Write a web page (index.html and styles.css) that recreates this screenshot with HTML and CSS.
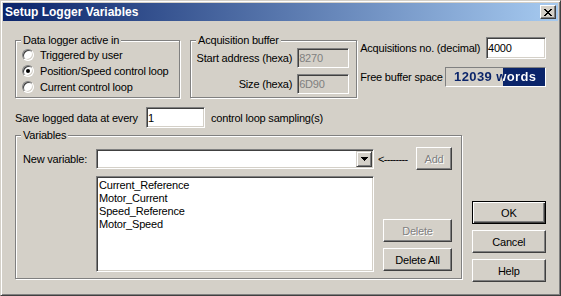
FILE: index.html
```html
<!DOCTYPE html>
<html lang="en">
<head>
    <meta charset="UTF-8">
    <title>Setup Logger Variables</title>
    <link rel="stylesheet" href="styles.css">
</head>
<body>
    <div class="window">
        <div class="titlebar">
            <span class="title">Setup Logger Variables</span>
            <button class="close-btn" type="button">
                <svg width="8" height="7" viewBox="0 0 8 7" shape-rendering="crispEdges">
                    <path d="M0 0h2v1h-2zM6 0h2v1h-2zM1 1h2v1h-2zM5 1h2v1h-2zM2 2h4v1h-4zM3 3h2v1h-2zM2 4h4v1h-4zM1 5h2v1h-2zM5 5h2v1h-2zM0 6h2v1h-2zM6 6h2v1h-2z" fill="#000"/>
                </svg>
            </button>
        </div>

        <div class="content">
            <div class="top-row">
                <fieldset class="group group-mode">
                    <legend>Data logger active in</legend>
                    <label class="radio-row"><span class="radio"></span>Triggered by user</label>
                    <label class="radio-row"><span class="radio checked"></span>Position/Speed control loop</label>
                    <label class="radio-row"><span class="radio"></span>Current control loop</label>
                </fieldset>

                <fieldset class="group group-buffer">
                    <legend>Acquisition buffer</legend>
                    <div class="buffer-body">
                        <div class="field-row">
                            <span>Start address (hexa)</span>
                            <input class="field hexa" type="text" value="8270" disabled>
                        </div>
                        <div class="field-row">
                            <span>Size (hexa)</span>
                            <input class="field hexa" type="text" value="6D90" disabled>
                        </div>
                    </div>
                </fieldset>

                <div class="acq">
                    <div class="acq-row">
                        <span>Acquisitions no. (decimal)</span>
                        <input class="field acq-count" type="text" value="4000">
                    </div>
                    <div class="acq-row free-row">
                        <span>Free buffer space</span>
                        <div class="gauge" style="--free: 42%">
                            <span class="gauge-text">12039 words</span>
                        </div>
                    </div>
                </div>
            </div>

            <div class="save-row">
                <span class="save-label">Save logged data at every</span>
                <input class="field save-every" type="text" value="1">
                <span class="save-unit">control loop sampling(s)</span>
            </div>

            <div class="bottom-row">
                <fieldset class="group group-vars">
                    <legend>Variables</legend>
                    <div class="vars-grid">
                        <span class="new-label">New variable:</span>
                        <div class="field combo">
                            <span class="combo-btn">
                                <svg width="7" height="4" viewBox="0 0 7 4" shape-rendering="crispEdges">
                                    <path d="M0 0h7v1h-7zM1 1h5v1h-5zM2 2h3v1h-3zM3 3h1v1h-1z" fill="#000"/>
                                </svg>
                            </span>
                        </div>
                        <div class="add-cell">
                            <span class="arrow">&lt;--------</span>
                            <button class="btn add-btn" type="button" disabled>Add</button>
                        </div>

                        <span></span>
                        <div class="field listbox">
                            <div>Current_Reference</div>
                            <div>Motor_Current</div>
                            <div>Speed_Reference</div>
                            <div>Motor_Speed</div>
                        </div>
                        <div class="list-btns">
                            <button class="btn list-btn" type="button" disabled>Delete</button>
                            <button class="btn list-btn" type="button">Delete All</button>
                        </div>
                    </div>
                </fieldset>

                <div class="dialog-btns">
                    <button class="btn default" type="button">OK</button>
                    <button class="btn" type="button">Cancel</button>
                    <button class="btn" type="button">Help</button>
                </div>
            </div>
        </div>
    </div>
</body>
</html>
```

FILE: styles.css
```css
body {
    margin: 0;
    font-family: "Liberation Sans", Arial, sans-serif;
    font-size: 11px;
    letter-spacing: -0.2px;
    white-space: nowrap;
    color: #000;
    background-color: #d4d0c8;
}
.window {
    width: 561px;
    height: 296px;
    box-sizing: border-box;
    overflow: hidden;
    padding: 2px;
    border: 1px solid;
    border-color: #d4d0c8 #404040 #404040 #d4d0c8;
    box-shadow: inset 1px 1px #fff, inset -1px -1px #808080;
    background-color: #d4d0c8;
}
.titlebar {
    height: 18px;
    display: flex;
    align-items: center;
    justify-content: space-between;
    padding: 0 2px 0 2px;
    background: linear-gradient(to right, #0a246a, #a6caf0);
}
.title {
    color: white;
    font-weight: bold;
    font-size: 12px;
    letter-spacing: 0;
}
.close-btn {
    width: 16px;
    height: 14px;
    padding: 0;
    display: flex;
    align-items: center;
    justify-content: center;
    background-color: #d4d0c8;
    border: 1px solid;
    border-color: #fff #404040 #404040 #fff;
    box-shadow: inset -1px -1px #808080;
}
.content {
    padding: 13px 12px 0 12px;
}

/* group boxes */
.group {
    margin: 0;
    padding: 0;
    min-width: 0;
    border: 1px solid #808080;
    box-shadow: inset 1px 1px #fff, 1px 1px #fff;
}
.group legend {
    margin-left: 5px;
    padding: 0 2px;
    line-height: 13px;
    background-color: #d4d0c8;
}
.top-row {
    display: flex;
    align-items: flex-start;
}
.group-mode {
    width: 165px;
    padding-bottom: 2px;
}
.radio-row {
    height: 16px;
    display: flex;
    align-items: center;
    gap: 6px;
    padding-left: 6px;
}
.radio {
    flex: none;
    width: 12px;
    height: 12px;
    box-sizing: border-box;
    border-radius: 50%;
    border: 1px solid;
    border-color: #808080 #fff #fff #808080;
    box-shadow: inset 1px 1px #404040, inset -1px -1px #d4d0c8;
    background-color: #fff;
    display: flex;
    align-items: center;
    justify-content: center;
}
.radio.checked::after {
    content: "";
    width: 4px;
    height: 4px;
    border-radius: 50%;
    background-color: #000;
}
.group-buffer {
    width: 167px;
    margin-left: 10px;
}
.buffer-body {
    display: flex;
    flex-direction: column;
    gap: 6px;
    padding: 1px 7px 3px 0;
}
.field-row {
    height: 20px;
    display: flex;
    align-items: center;
    justify-content: flex-end;
    gap: 5px;
}

/* sunken edit fields */
.field {
    box-sizing: border-box;
    margin: 0;
    padding: 0 1px;
    font: inherit;
    letter-spacing: inherit;
    color: #000;
    background-color: #fff;
    border: 1px solid;
    border-color: #808080 #fff #fff #808080;
    box-shadow: inset 1px 1px #404040, inset -1px -1px #d4d0c8;
    outline: none;
}
.hexa {
    width: 52px;
    height: 20px;
}
.hexa:disabled {
    color: #808080;
    background-color: #d4d0c8;
}
.acq {
    width: 188px;
    margin: 3px 0 0 3px;
}
.acq-row {
    display: flex;
    align-items: center;
    justify-content: space-between;
}
.acq-count {
    width: 60px;
    height: 22px;
}
.free-row {
    margin-top: 8px;
}
.gauge {
    width: 101px;
    height: 20px;
    box-sizing: border-box;
    border: 1px solid;
    border-color: #808080 #fff #fff #808080;
    background: linear-gradient(to right, #d4d0c8 calc(100% - var(--free)), #0a246a 0);
}
.gauge-text {
    display: block;
    padding-left: 8px;
    line-height: 18px;
    font-size: 13px;
    font-weight: bold;
    letter-spacing: 0.4px;
    color: transparent;
    background: linear-gradient(to right, #0a246a calc(100% - var(--free)), #fff 0);
    -webkit-background-clip: text;
    background-clip: text;
}
.save-row {
    height: 21px;
    margin-top: 9px;
    display: flex;
    align-items: center;
}
.save-label {
    width: 131px;
}
.save-every {
    width: 59px;
    height: 21px;
}
.save-unit {
    margin-left: 6px;
}

/* variables */
.bottom-row {
    margin-top: 1px;
    display: flex;
    align-items: flex-start;
}
.group-vars {
    width: 448px;
}
.vars-grid {
    display: grid;
    grid-template-columns: 73px 278px 78px;
    grid-template-rows: 23px 96px;
    row-gap: 6px;
    padding: 5px 10px 6px 7px;
}
.new-label {
    align-self: center;
}
.combo {
    height: 20px;
    margin-top: 2px;
    padding: 1px;
    display: flex;
    justify-content: flex-end;
}
.combo-btn {
    width: 16px;
    height: 16px;
    box-sizing: border-box;
    display: flex;
    align-items: center;
    justify-content: center;
    background-color: #d4d0c8;
    border: 1px solid;
    border-color: #d4d0c8 #404040 #404040 #d4d0c8;
    box-shadow: inset 1px 1px #fff, inset -1px -1px #808080;
}
.add-cell {
    display: flex;
    align-items: center;
    justify-content: space-between;
    padding-left: 4px;
}
.arrow {
    letter-spacing: -0.7px;
}
.add-btn {
    width: 36px;
}
.listbox {
    height: 96px;
    padding: 2px;
    line-height: 13px;
}
.list-btns {
    display: flex;
    flex-direction: column;
    align-items: flex-end;
    justify-content: flex-end;
    gap: 6px;
    padding-bottom: 1px;
}
.list-btn {
    width: 69px;
}

/* push buttons */
.btn {
    box-sizing: border-box;
    height: 23px;
    padding: 0;
    font: inherit;
    letter-spacing: inherit;
    color: #000;
    background-color: #d4d0c8;
    border: 1px solid;
    border-color: #fff #404040 #404040 #fff;
    box-shadow: inset -1px -1px #808080;
}
.btn:disabled {
    color: #808080;
    text-shadow: 1px 1px #fff;
}
.btn.default {
    border-color: #000;
    box-shadow: inset 1px 1px #fff, inset -1px -1px #404040, inset -2px -2px #808080;
}
.dialog-btns {
    width: 75px;
    margin: 72px 0 0 10px;
    display: flex;
    flex-direction: column;
    gap: 6px;
}
```
